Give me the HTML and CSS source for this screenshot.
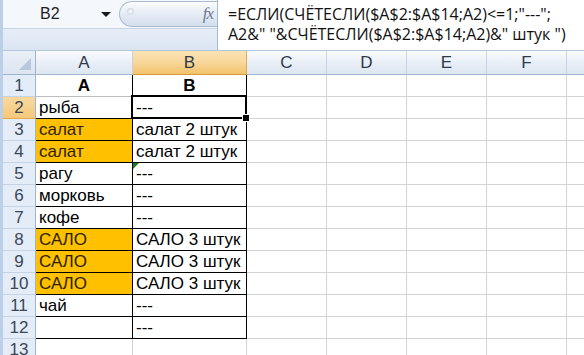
FILE: index.html
```html
<!DOCTYPE html>
<html lang="ru">
<head>
    <meta charset="UTF-8">
    <title>СЧЁТЕСЛИ</title>
    <link rel="stylesheet" href="styles.css">
</head>
<body>
    <div class="window">
        <div class="formula-bar">
            <div class="name-area">
                <div class="name-row">
                    <div class="name-box">B2</div>
                    <span class="name-arrow"></span>
                    <div class="fx-pill">
                        <span class="pill-dot"></span>
                        <span class="fx">fx</span>
                    </div>
                </div>
                <div class="name-band"></div>
            </div>
            <div class="formula">
                <div>=ЕСЛИ(СЧЁТЕСЛИ($A$2:$A$14;A2)&lt;=1;"---";</div>
                <div>A2&amp;" "&amp;СЧЁТЕСЛИ($A$2:$A$14;A2)&amp;" штук ")</div>
            </div>
        </div>

        <div class="sheet">
            <div class="ch corner"><span class="corner-tri"></span></div>
            <div class="ch">A</div>
            <div class="ch sel">B</div>
            <div class="ch">C</div>
            <div class="ch">D</div>
            <div class="ch">E</div>
            <div class="ch">F</div>
            <div class="ch"></div>

            <div class="rh">1</div>
            <div class="c bd head top-a">A</div>
            <div class="c bd head">B</div>
            <div class="c"></div><div class="c"></div><div class="c"></div><div class="c"></div><div class="c"></div>

            <div class="rh sel">2</div>
            <div class="c bd">рыба</div>
            <div class="c bd active">---</div>
            <div class="c"></div><div class="c"></div><div class="c"></div><div class="c"></div><div class="c"></div>

            <div class="rh">3</div>
            <div class="c bd fill">салат</div>
            <div class="c bd">салат 2 штук</div>
            <div class="c"></div><div class="c"></div><div class="c"></div><div class="c"></div><div class="c"></div>

            <div class="rh">4</div>
            <div class="c bd fill">салат</div>
            <div class="c bd">салат 2 штук</div>
            <div class="c"></div><div class="c"></div><div class="c"></div><div class="c"></div><div class="c"></div>

            <div class="rh">5</div>
            <div class="c bd">рагу</div>
            <div class="c bd flag">---</div>
            <div class="c"></div><div class="c"></div><div class="c"></div><div class="c"></div><div class="c"></div>

            <div class="rh">6</div>
            <div class="c bd">морковь</div>
            <div class="c bd">---</div>
            <div class="c"></div><div class="c"></div><div class="c"></div><div class="c"></div><div class="c"></div>

            <div class="rh">7</div>
            <div class="c bd">кофе</div>
            <div class="c bd">---</div>
            <div class="c"></div><div class="c"></div><div class="c"></div><div class="c"></div><div class="c"></div>

            <div class="rh">8</div>
            <div class="c bd fill">САЛО</div>
            <div class="c bd">САЛО 3 штук</div>
            <div class="c"></div><div class="c"></div><div class="c"></div><div class="c"></div><div class="c"></div>

            <div class="rh">9</div>
            <div class="c bd fill">САЛО</div>
            <div class="c bd">САЛО 3 штук</div>
            <div class="c"></div><div class="c"></div><div class="c"></div><div class="c"></div><div class="c"></div>

            <div class="rh">10</div>
            <div class="c bd fill">САЛО</div>
            <div class="c bd">САЛО 3 штук</div>
            <div class="c"></div><div class="c"></div><div class="c"></div><div class="c"></div><div class="c"></div>

            <div class="rh">11</div>
            <div class="c bd">чай</div>
            <div class="c bd">---</div>
            <div class="c"></div><div class="c"></div><div class="c"></div><div class="c"></div><div class="c"></div>

            <div class="rh">12</div>
            <div class="c bd"></div>
            <div class="c bd">---</div>
            <div class="c"></div><div class="c"></div><div class="c"></div><div class="c"></div><div class="c"></div>

            <div class="rh">13</div>
            <div class="c"></div>
            <div class="c"></div>
            <div class="c"></div><div class="c"></div><div class="c"></div><div class="c"></div><div class="c"></div>
        </div>
    </div>
</body>
</html>
```

FILE: styles.css
```css
* {
    box-sizing: border-box;
}
body {
    margin: 0;
    font-family: "Liberation Sans", Arial, sans-serif;
    background: #fff;
}
.window {
    width: 584px;
    height: 355px;
    overflow: hidden;
    border-left: 3px solid #bccfe8;
    background: #fff;
}

/* formula bar */
.formula-bar {
    display: flex;
    height: 51px;
    border-bottom: 1px solid #b4c6dc;
}
.name-area {
    width: 214px;
    display: flex;
    flex-direction: column;
    background: #f4f7fb;
}
.name-row {
    height: 28px;
    display: flex;
    align-items: center;
}
.name-box {
    width: 93px;
    padding-left: 37px;
    font-size: 16px;
    color: #1e1e1e;
}
.name-arrow {
    width: 0;
    height: 0;
    border-left: 5px solid transparent;
    border-right: 5px solid transparent;
    border-top: 5px solid #1a1a1a;
    margin-left: 5px;
}
.fx-pill {
    position: relative;
    margin-left: 8px;
    width: 98px;
    height: 26px;
    border: 1px solid #a9bcd4;
    border-right: none;
    border-radius: 13px 0 0 13px;
    background: linear-gradient(#fbfcfe, #e3eaf4 55%, #d3deec);
    display: flex;
    align-items: center;
    justify-content: flex-end;
    padding-right: 4px;
}
.pill-dot {
    position: absolute;
    left: 7px;
    top: 6px;
    width: 7px;
    height: 7px;
    border-radius: 50%;
    background: radial-gradient(#ffffff, #b9c6d6);
}
.fx {
    font-family: "Liberation Serif", serif;
    font-style: italic;
    font-size: 17px;
    color: #6b7b8e;
    letter-spacing: -1px;
}
.name-band {
    flex: 1;
    background: linear-gradient(#e6edf7, #dbe5f2);
    border-top: 1px solid #c6d4e6;
}
.formula {
    flex: 1;
    border-left: 1px solid #a5b8cf;
    padding: 4px 0 0 10px;
    font-family: "Open Sans", sans-serif;
    font-size: 16px;
    line-height: 20px;
    color: #111;
    white-space: nowrap;
}

/* grid */
.sheet {
    display: grid;
    grid-template-columns: 33px 97px 114px 80px 80px 80px 80px 30px;
    grid-template-rows: 24px repeat(13, 22px);
}
.ch {
    background: linear-gradient(#fafcfe, #e9eff7 50%, #dde6f1);
    border-right: 1px solid #c5d3e3;
    border-bottom: 1px solid #9fb5cd;
    display: flex;
    align-items: center;
    justify-content: center;
    font-size: 17px;
    color: #2f3b4b;
}
.ch.sel {
    background: linear-gradient(#fbe3b4, #f8d79a 50%, #f2c36a);
    border-right-color: #e0aa54;
    border-bottom-color: #d99a3c;
}
.corner {
    position: relative;
    background: linear-gradient(#e9eff7, #dce5f0);
    border-right-color: #9fb5cd;
}
.corner-tri {
    position: absolute;
    right: 4px;
    bottom: 4px;
    width: 0;
    height: 0;
    border-left: 12px solid transparent;
    border-bottom: 12px solid #b8c8dc;
}
.rh {
    background: #e4ecf7;
    border-right: 1px solid #9fb5cd;
    border-bottom: 1px solid #c5d3e3;
    display: flex;
    align-items: center;
    justify-content: center;
    font-size: 17px;
    color: #3b4859;
}
.rh.sel {
    background: linear-gradient(#f9d9a0, #f5c87c);
    border-bottom-color: #e0aa54;
}
.c {
    border-right: 1px solid #d4d4d4;
    border-bottom: 1px solid #d4d4d4;
    padding-left: 3px;
    font-size: 17px;
    line-height: 22px;
    color: #000;
    white-space: nowrap;
    overflow: hidden;
}
.c.bd {
    border-right-color: #000;
    border-bottom-color: #000;
}
.c.top-a {
    border-bottom-color: #bdbdbd;
}
.c.head {
    font-weight: bold;
    text-align: center;
    padding-left: 0;
}
.c.fill {
    background: #ffc000;
    color: #2a1e00;
}
.c.active {
    position: relative;
    overflow: visible;
}
.c.active::after {
    content: "";
    position: absolute;
    left: -2px;
    top: -2px;
    right: -1px;
    bottom: -1px;
    border: 2px solid #000;
}
.c.active::before {
    content: "";
    position: absolute;
    right: -4px;
    bottom: -4px;
    width: 6px;
    height: 6px;
    background: #000;
    border: 1px solid #fff;
    z-index: 1;
}
.c.flag {
    position: relative;
}
.c.flag::before {
    content: "";
    position: absolute;
    left: 0;
    top: 0;
    border-top: 6px solid #1e7a1e;
    border-right: 6px solid transparent;
}
```
